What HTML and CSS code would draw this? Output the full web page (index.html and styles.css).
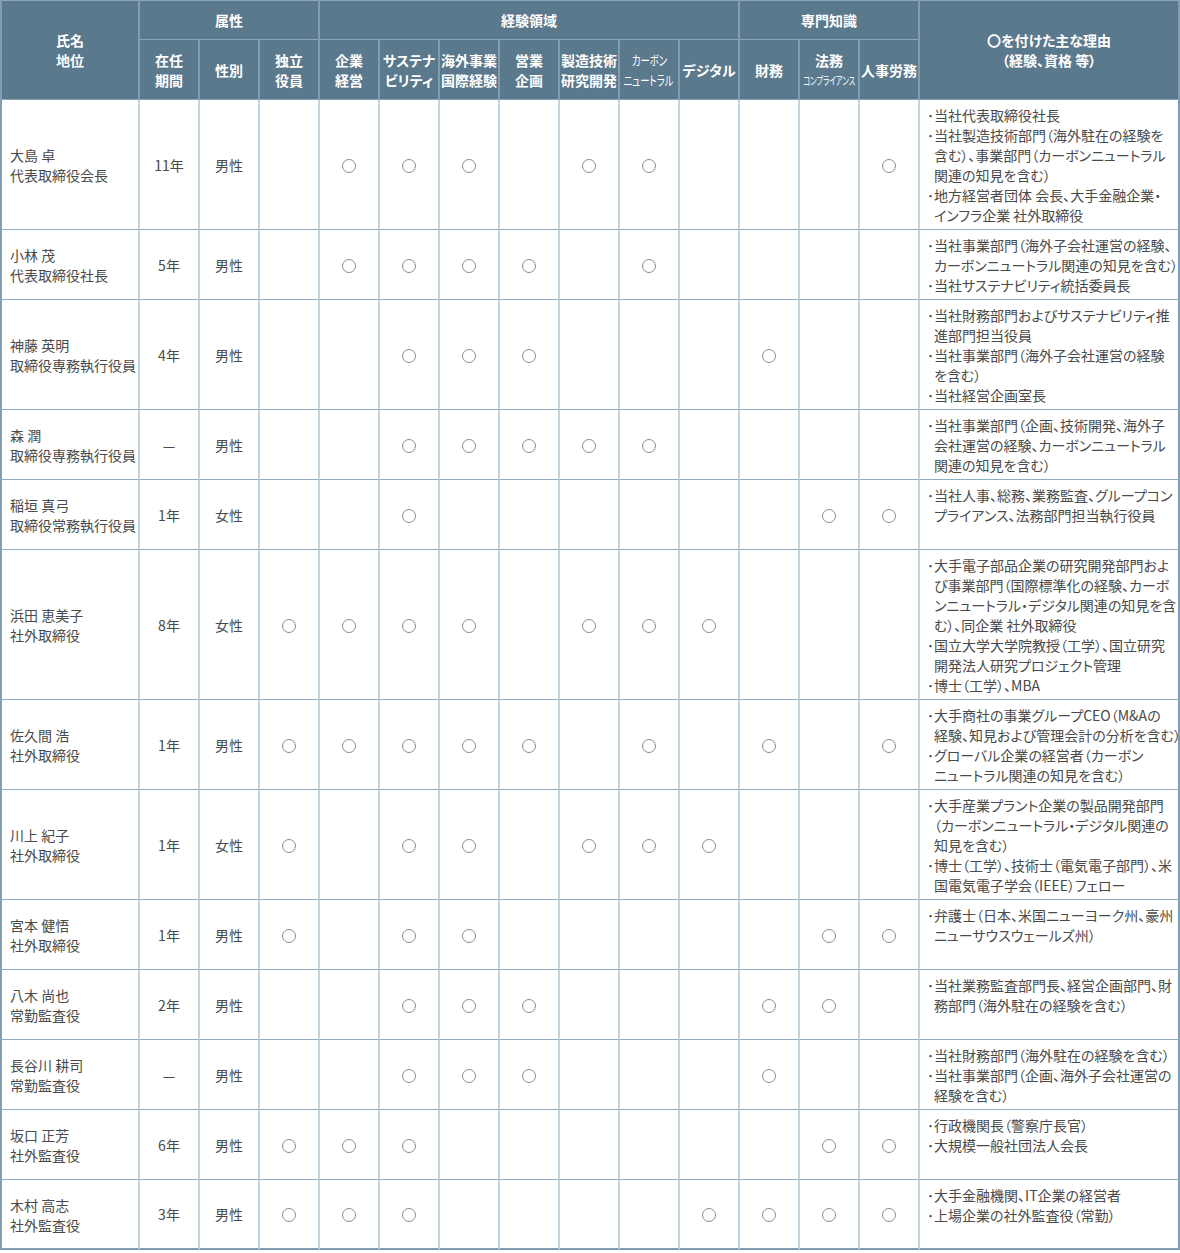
FILE: index.html
```html
<!DOCTYPE html>
<html lang="ja">
<head>
<meta charset="utf-8">
<title>取締役・監査役のスキルマトリックス</title>
<link rel="stylesheet" href="styles.css">
</head>
<body>
<table class="sk">
<colgroup>
<col class="w-name">
<col class="w-c"><col class="w-c"><col class="w-c">
<col class="w-c"><col class="w-c"><col class="w-c"><col class="w-c"><col class="w-c"><col class="w-c"><col class="w-c">
<col class="w-c"><col class="w-c"><col class="w-c">
<col class="w-r">
</colgroup>
<thead>
<tr class="h1">
<th rowspan="2" class="first">氏名<br>地位</th>
<th colspan="3">属性</th>
<th colspan="7">経験領域</th>
<th colspan="3">専門知識</th>
<th rowspan="2" class="last">〇を付けた主な理由<br>（経験、資格 等）</th>
</tr>
<tr class="h2">
<th>在任<br>期間</th>
<th>性別</th>
<th>独立<br>役員</th>
<th>企業<br>経営</th>
<th>サステナ<br>ビリティ</th>
<th>海外事業<br>国際経験</th>
<th>営業<br>企画</th>
<th>製造技術<br>研究開発</th>
<th><span class="cd">カーボン</span><br><span class="cd">ニュートラル</span></th>
<th>デジタル</th>
<th>財務</th>
<th>法務<br><span class="cp">コンプライアンス</span></th>
<th>人事労務</th>
</tr>
</thead>
<tbody>
<tr>
<td class="nm">大島 卓<br>代表取締役会長</td>
<td class="ct">11年</td><td class="ct">男性</td>
<td class="m"></td>
<td class="m o"></td><td class="m o"></td><td class="m o"></td><td class="m"></td><td class="m o"></td><td class="m o"></td><td class="m"></td>
<td class="m"></td><td class="m"></td><td class="m o"></td>
<td class="rs"><div class="r">･当社代表取締役社長</div><div class="r">･当社製造技術部門（海外駐在の経験を<br>含む）、事業部門（カーボンニュートラル<br>関連の知見を含む）</div><div class="r">･地方経営者団体 会長、大手金融企業・<br>インフラ企業 社外取締役</div></td>
</tr>
<tr>
<td class="nm">小林 茂<br>代表取締役社長</td>
<td class="ct">5年</td><td class="ct">男性</td>
<td class="m"></td>
<td class="m o"></td><td class="m o"></td><td class="m o"></td><td class="m o"></td><td class="m"></td><td class="m o"></td><td class="m"></td>
<td class="m"></td><td class="m"></td><td class="m"></td>
<td class="rs"><div class="r">･当社事業部門（海外子会社運営の経験、<br>カーボンニュートラル関連の知見を含む）</div><div class="r">･当社サステナビリティ統括委員長</div></td>
</tr>
<tr>
<td class="nm">神藤 英明<br>取締役専務執行役員</td>
<td class="ct">4年</td><td class="ct">男性</td>
<td class="m"></td>
<td class="m"></td><td class="m o"></td><td class="m o"></td><td class="m o"></td><td class="m"></td><td class="m"></td><td class="m"></td>
<td class="m o"></td><td class="m"></td><td class="m"></td>
<td class="rs"><div class="r">･当社財務部門およびサステナビリティ推<br>進部門担当役員</div><div class="r">･当社事業部門（海外子会社運営の経験<br>を含む）</div><div class="r">･当社経営企画室長</div></td>
</tr>
<tr>
<td class="nm">森 潤<br>取締役専務執行役員</td>
<td class="ct">—</td><td class="ct">男性</td>
<td class="m"></td>
<td class="m"></td><td class="m o"></td><td class="m o"></td><td class="m o"></td><td class="m o"></td><td class="m o"></td><td class="m"></td>
<td class="m"></td><td class="m"></td><td class="m"></td>
<td class="rs"><div class="r">･当社事業部門（企画、技術開発、海外子<br>会社運営の経験、カーボンニュートラル<br>関連の知見を含む）</div></td>
</tr>
<tr>
<td class="nm">稲垣 真弓<br>取締役常務執行役員</td>
<td class="ct">1年</td><td class="ct">女性</td>
<td class="m"></td>
<td class="m"></td><td class="m o"></td><td class="m"></td><td class="m"></td><td class="m"></td><td class="m"></td><td class="m"></td>
<td class="m"></td><td class="m o"></td><td class="m o"></td>
<td class="rs"><div class="r">･当社人事、総務、業務監査、グループコン<br>プライアンス、法務部門担当執行役員</div></td>
</tr>
<tr>
<td class="nm">浜田 恵美子<br>社外取締役</td>
<td class="ct">8年</td><td class="ct">女性</td>
<td class="m o"></td>
<td class="m o"></td><td class="m o"></td><td class="m o"></td><td class="m"></td><td class="m o"></td><td class="m o"></td><td class="m o"></td>
<td class="m"></td><td class="m"></td><td class="m"></td>
<td class="rs"><div class="r">･大手電子部品企業の研究開発部門およ<br>び事業部門（国際標準化の経験、カーボ<br>ンニュートラル・デジタル関連の知見を含<br>む）、同企業 社外取締役</div><div class="r">･国立大学大学院教授（工学）、国立研究<br>開発法人研究プロジェクト管理</div><div class="r">･博士（工学）、MBA</div></td>
</tr>
<tr>
<td class="nm">佐久間 浩<br>社外取締役</td>
<td class="ct">1年</td><td class="ct">男性</td>
<td class="m o"></td>
<td class="m o"></td><td class="m o"></td><td class="m o"></td><td class="m o"></td><td class="m"></td><td class="m o"></td><td class="m"></td>
<td class="m o"></td><td class="m"></td><td class="m o"></td>
<td class="rs"><div class="r">･大手商社の事業グループCEO（M&amp;Aの<br>経験、知見および管理会計の分析を含む）</div><div class="r">･グローバル企業の経営者（カーボン<br>ニュートラル関連の知見を含む）</div></td>
</tr>
<tr>
<td class="nm">川上 紀子<br>社外取締役</td>
<td class="ct">1年</td><td class="ct">女性</td>
<td class="m o"></td>
<td class="m"></td><td class="m o"></td><td class="m o"></td><td class="m"></td><td class="m o"></td><td class="m o"></td><td class="m o"></td>
<td class="m"></td><td class="m"></td><td class="m"></td>
<td class="rs"><div class="r">･大手産業プラント企業の製品開発部門<br>（カーボンニュートラル・デジタル関連の<br>知見を含む）</div><div class="r">･博士（工学）、技術士（電気電子部門）、米<br>国電気電子学会（IEEE）フェロー</div></td>
</tr>
<tr>
<td class="nm">宮本 健悟<br>社外取締役</td>
<td class="ct">1年</td><td class="ct">男性</td>
<td class="m o"></td>
<td class="m"></td><td class="m o"></td><td class="m o"></td><td class="m"></td><td class="m"></td><td class="m"></td><td class="m"></td>
<td class="m"></td><td class="m o"></td><td class="m o"></td>
<td class="rs"><div class="r">･弁護士（日本、米国ニューヨーク州、豪州<br>ニューサウスウェールズ州）</div></td>
</tr>
<tr>
<td class="nm">八木 尚也<br>常勤監査役</td>
<td class="ct">2年</td><td class="ct">男性</td>
<td class="m"></td>
<td class="m"></td><td class="m o"></td><td class="m o"></td><td class="m o"></td><td class="m"></td><td class="m"></td><td class="m"></td>
<td class="m o"></td><td class="m o"></td><td class="m"></td>
<td class="rs"><div class="r">･当社業務監査部門長、経営企画部門、財<br>務部門（海外駐在の経験を含む）</div></td>
</tr>
<tr>
<td class="nm">長谷川 耕司<br>常勤監査役</td>
<td class="ct">—</td><td class="ct">男性</td>
<td class="m"></td>
<td class="m"></td><td class="m o"></td><td class="m o"></td><td class="m o"></td><td class="m"></td><td class="m"></td><td class="m"></td>
<td class="m o"></td><td class="m"></td><td class="m"></td>
<td class="rs"><div class="r">･当社財務部門（海外駐在の経験を含む）</div><div class="r">･当社事業部門（企画、海外子会社運営の<br>経験を含む）</div></td>
</tr>
<tr>
<td class="nm">坂口 正芳<br>社外監査役</td>
<td class="ct">6年</td><td class="ct">男性</td>
<td class="m o"></td>
<td class="m o"></td><td class="m o"></td><td class="m"></td><td class="m"></td><td class="m"></td><td class="m"></td><td class="m"></td>
<td class="m"></td><td class="m o"></td><td class="m o"></td>
<td class="rs"><div class="r">･行政機関長（警察庁長官）</div><div class="r">･大規模一般社団法人会長</div></td>
</tr>
<tr class="lastrow">
<td class="nm">木村 高志<br>社外監査役</td>
<td class="ct">3年</td><td class="ct">男性</td>
<td class="m o"></td>
<td class="m o"></td><td class="m o"></td><td class="m"></td><td class="m"></td><td class="m"></td><td class="m"></td><td class="m o"></td>
<td class="m o"></td><td class="m o"></td><td class="m o"></td>
<td class="rs"><div class="r">･大手金融機関、IT企業の経営者</div><div class="r">･上場企業の社外監査役（常勤）</div></td>
</tr>
</tbody>
</table>
</body>
</html>
```

FILE: styles.css
```css
html, body {
  margin: 0;
  padding: 0;
  background: #ffffff;
}

body {
  font-family: "Noto Sans CJK JP", "Noto Sans", sans-serif;
  color: #4a4a4a;
}

.sk {
  border-collapse: separate;
  border-spacing: 0;
  table-layout: fixed;
  width: 1180px;
}

.w-name { width: 140px; }
.w-c { width: 60px; }
.w-r { width: 260px; }

.sk th,
.sk td {
  box-sizing: border-box;
  padding: 0;
  font-size: 14px;
  line-height: 20px;
}

/* header */
.sk th {
  background: #5b798d;
  color: #ffffff;
  font-weight: 700;
  text-align: center;
  vertical-align: middle;
  border-right: 2px solid #7f9cb0;
  border-bottom: 1px solid #8aa6b9;
  font-feature-settings: "palt";
  white-space: nowrap;
}

.sk .h1 th {
  border-top: 1px solid #8aa6b9;
  padding: 9px 0;
}

.sk .h2 th {
  padding: 10px 0 9px;
}

.sk th.first {
  border-left: 2px solid #7f9cb0;
}

.sk th.last {
  border-right: 2px solid #7f9cb0;
}

.cd {
  display: inline-block;
  vertical-align: top;
  font-size: 13px;
  line-height: 20px;
  height: 20px;
  font-weight: 400;
  transform: scaleX(0.72);
  margin: 0 -24px;
}

.cp {
  display: inline-block;
  vertical-align: top;
  font-size: 11px;
  line-height: 20px;
  height: 20px;
  font-weight: 400;
  transform: scaleX(0.66);
  margin: 0 -30px;
}

/* body */
.sk td {
  background: #ffffff;
  border-right: 2px solid #c5d5e0;
  border-bottom: 1px solid #8fadc1;
  vertical-align: middle;
}

.sk td.nm {
  border-left: 2px solid #7f9db3;
  padding: 15px 4px 14px 8px;
  text-align: left;
  white-space: nowrap;
}

.sk td.ct,
.sk td.m {
  text-align: center;
}

.sk td.o::before {
  content: "";
  display: inline-block;
  width: 12px;
  height: 12px;
  border: 1px solid #8c8c8c;
  border-radius: 50%;
  vertical-align: -2px;
}

.sk td.rs {
  border-right: 2px solid #7f9db3;
  padding: 5px 0 4px 7px;
  vertical-align: top;
  white-space: nowrap;
  font-feature-settings: "palt";
}

.r {
  padding-left: 7px;
  text-indent: -7px;
}

.sk .lastrow td {
  border-bottom: 2px solid #7f9db3;
}

.sk .lastrow td.nm {
  padding-bottom: 13px;
}

.sk .lastrow td.rs {
  padding-bottom: 3px;
}
```
